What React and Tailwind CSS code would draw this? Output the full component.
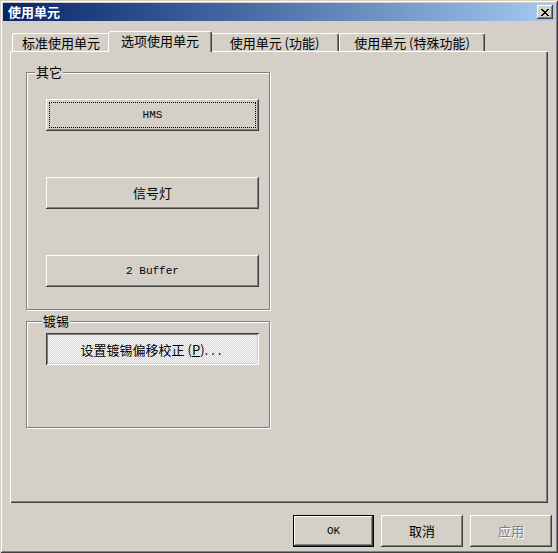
import React from "react";

const raised =
  "shadow-[inset_-1px_-1px_#404040,inset_1px_1px_#fff,inset_-2px_-2px_#808080,inset_2px_2px_#d4d0c8]";
const pressed =
  "shadow-[inset_1px_1px_#404040,inset_-1px_-1px_#fff,inset_2px_2px_#808080,inset_-2px_-2px_#d4d0c8]";
const mono = "font-['Liberation_Mono',monospace] text-[11px]";

const Tab = ({ label, width, active }) => (
  <div
    className={
      active
        ? "relative z-10 -mx-[2px] -mb-[1px] flex h-[21px] items-start justify-center rounded-t-[3px] border-l border-t border-r border-white border-r-[#404040] bg-[#d4d0c8] pt-[1px] shadow-[inset_-1px_0_#808080]"
        : "flex h-[18px] items-start justify-center rounded-t-[3px] border-l border-t border-r border-white border-r-[#404040] pt-[1px] shadow-[inset_-1px_0_#808080]"
    }
    style={{ width: active ? width + 4 : width }}
  >
    <span className="leading-[15px]">{label}</span>
  </div>
);

const Group = ({ label, labelLeft, className, children }) => (
  <div
    className={
      "relative border border-[#808080] shadow-[inset_1px_1px_#fff,1px_1px_#fff] " +
      className
    }
  >
    <span
      className={
        "absolute -top-[9px] bg-[#d4d0c8] px-[1px] leading-[15px] " + labelLeft
      }
    >
      {label}
    </span>
    {children}
  </div>
);

export default function App() {
  return (
    <div className="flex h-[553px] w-[558px] flex-col bg-[#d4d0c8] p-[3px] font-['Noto_Sans_CJK_SC',sans-serif] text-[13px] text-black shadow-[inset_1px_1px_#d4d0c8,inset_-1px_-1px_#404040,inset_2px_2px_#fff,inset_-2px_-2px_#808080]">
      {/* title bar */}
      <div className="flex h-[18px] items-center justify-between bg-linear-to-r from-[#0a246a] to-[#a6caf0] pl-[5px] pr-[2px]">
        <span className="text-[13px] font-bold leading-[16px] text-white">
          使用单元
        </span>
        <div className={"flex h-[14px] w-[16px] items-center justify-center bg-[#d4d0c8] " + raised}>
          <svg width="8" height="7" viewBox="0 0 8 7" shapeRendering="crispEdges">
            <path
              d="M0 0h2v1h-2zM6 0h2v1h-2zM1 1h2v1h-2zM5 1h2v1h-2zM2 2h4v1h-4zM3 3h2v1h-2zM2 4h4v1h-4zM1 5h2v1h-2zM5 5h2v1h-2zM0 6h2v1h-2zM6 6h2v1h-2z"
              fill="#000"
            />
          </svg>
        </div>
      </div>

      {/* tabs */}
      <div className="mt-[10px] flex h-[20px] items-end pl-[9px]">
        <Tab label="标准使用单元" width={98} />
        <Tab label="选项使用单元" width={100} active />
        <Tab label="使用单元 (功能)" width={129} />
        <Tab label="使用单元 (特殊功能)" width={146} />
      </div>

      {/* panel */}
      <div className="ml-[7px] h-[452px] w-[538px] pl-[16px] pt-[21px] shadow-[inset_1px_1px_#fff,inset_-1px_-1px_#404040,inset_-2px_-2px_#808080]">
        <Group label="其它" labelLeft="left-[8px]" className="h-[238px] w-[244px] pl-[19px] pt-[26px]">
          <div className="flex flex-col gap-[46px]">
            <button
              className={
                "flex h-[32px] w-[213px] items-center justify-center outline-1 -outline-offset-4 outline-dotted outline-black " +
                mono +
                " " +
                raised
              }
            >
              HMS
            </button>
            <button className={"flex h-[32px] w-[213px] items-center justify-center " + raised}>
              信号灯
            </button>
            <button
              className={"flex h-[32px] w-[213px] items-center justify-center " + mono + " " + raised}
            >
              2 Buffer
            </button>
          </div>
        </Group>
        <Group label="镀锡" labelLeft="left-[15px]" className="mt-[11px] h-[107px] w-[244px] pl-[19px] pt-[11px]">
          <button
            className={
              "flex h-[32px] w-[213px] items-center justify-center bg-[repeating-conic-gradient(#fff_0_25%,#d4d0c8_0_50%)] bg-[length:2px_2px] " +
              pressed
            }
          >
            <span className="pt-[1px]">
              设置镀锡偏移校正 (<span className="underline">P</span>)
              <span className="tracking-[3px]">...</span>
            </span>
          </button>
        </Group>
      </div>

      {/* buttons */}
      <div className="mt-[12px] flex justify-end gap-[7px] pr-[3px]">
        <button
          className={
            "flex h-[32px] w-[81px] items-center justify-center shadow-[inset_0_0_0_1px_#000,inset_-2px_-2px_#404040,inset_2px_2px_#fff,inset_-3px_-3px_#808080] " +
            mono
          }
        >
          OK
        </button>
        <button className={"flex h-[32px] w-[82px] items-center justify-center " + raised}>
          取消
        </button>
        <button
          className={
            "flex h-[32px] w-[82px] items-center justify-center text-[#808080] [text-shadow:1px_1px_0_#fff] " +
            raised
          }
        >
          应用
        </button>
      </div>
    </div>
  );
}
